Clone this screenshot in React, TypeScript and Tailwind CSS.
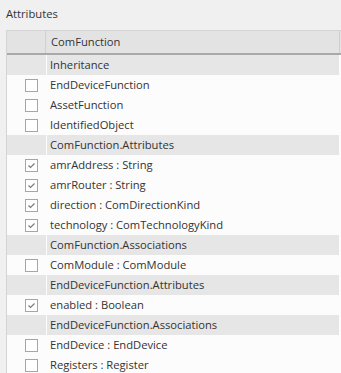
import React from "react";

type Row = { kind: "group"; text: string } | { kind: "item"; text: string; checked: boolean };

const rows: Row[] = [
  { kind: "group", text: "Inheritance" },
  { kind: "item", text: "EndDeviceFunction", checked: false },
  { kind: "item", text: "AssetFunction", checked: false },
  { kind: "item", text: "IdentifiedObject", checked: false },
  { kind: "group", text: "ComFunction.Attributes" },
  { kind: "item", text: "amrAddress : String", checked: true },
  { kind: "item", text: "amrRouter : String", checked: true },
  { kind: "item", text: "direction : ComDirectionKind", checked: true },
  { kind: "item", text: "technology : ComTechnologyKind", checked: true },
  { kind: "group", text: "ComFunction.Associations" },
  { kind: "item", text: "ComModule : ComModule", checked: false },
  { kind: "group", text: "EndDeviceFunction.Attributes" },
  { kind: "item", text: "enabled : Boolean", checked: true },
  { kind: "group", text: "EndDeviceFunction.Associations" },
  { kind: "item", text: "EndDevice : EndDevice", checked: false },
  { kind: "item", text: "Registers : Register", checked: false },
];

function Box({ checked }: { checked: boolean }) {
  return (
    <div className="w-[13px] h-[13px] border border-[#a6a6a6] bg-white flex items-center justify-center">
      {checked && (
        <svg width="9" height="9" viewBox="0 0 9 9">
          <path d="M1.5 4.5 L3.5 6.5 L7.5 2.5" fill="none" stroke="#7a7a7a" strokeWidth="1.2" />
        </svg>
      )}
    </div>
  );
}

export default function App() {
  return (
    <div
      className="w-[341px] h-[373px] bg-[#f0f0f0] overflow-hidden text-[11.2px] text-[#333333]"
      style={{ fontFamily: "'Open Sans', 'Noto Sans', sans-serif" }}
    >
      <div className="h-[30px] pl-[6px] flex items-center pb-[2px]">Attributes</div>
      <div className="ml-[6px] border-l border-t border-[#d4d4d4] bg-[#fcfcfc]">
        <div className="h-[24px] flex bg-[#e3e3e3] border-b-2 border-[#a9a9a9]">
          <div className="w-[39px] border-r border-[#d0d0d0]" />
          <div className="flex-1 flex items-center pl-[5px] border-r border-[#cfcfcf] mr-[1px]">ComFunction</div>
        </div>
        {rows.map((r, i) =>
          r.kind === "group" ? (
            <div key={i} className="h-[20px] flex mr-[2px]">
              <div className="w-[39px] bg-[#e6e6e6]" />
              <div className="w-px bg-[#fcfcfc]" />
              <div className="flex-1 bg-[#e6e6e6] flex items-center pl-[3px]">{r.text}</div>
            </div>
          ) : (
            <div key={i} className="h-[20px] flex">
              <div className="w-[39px] flex items-center pl-[18px]">
                <Box checked={r.checked} />
              </div>
              <div className="w-px" />
              <div className="flex-1 flex items-center pl-[3px]">{r.text}</div>
            </div>
          )
        )}
      </div>
    </div>
  );
}
